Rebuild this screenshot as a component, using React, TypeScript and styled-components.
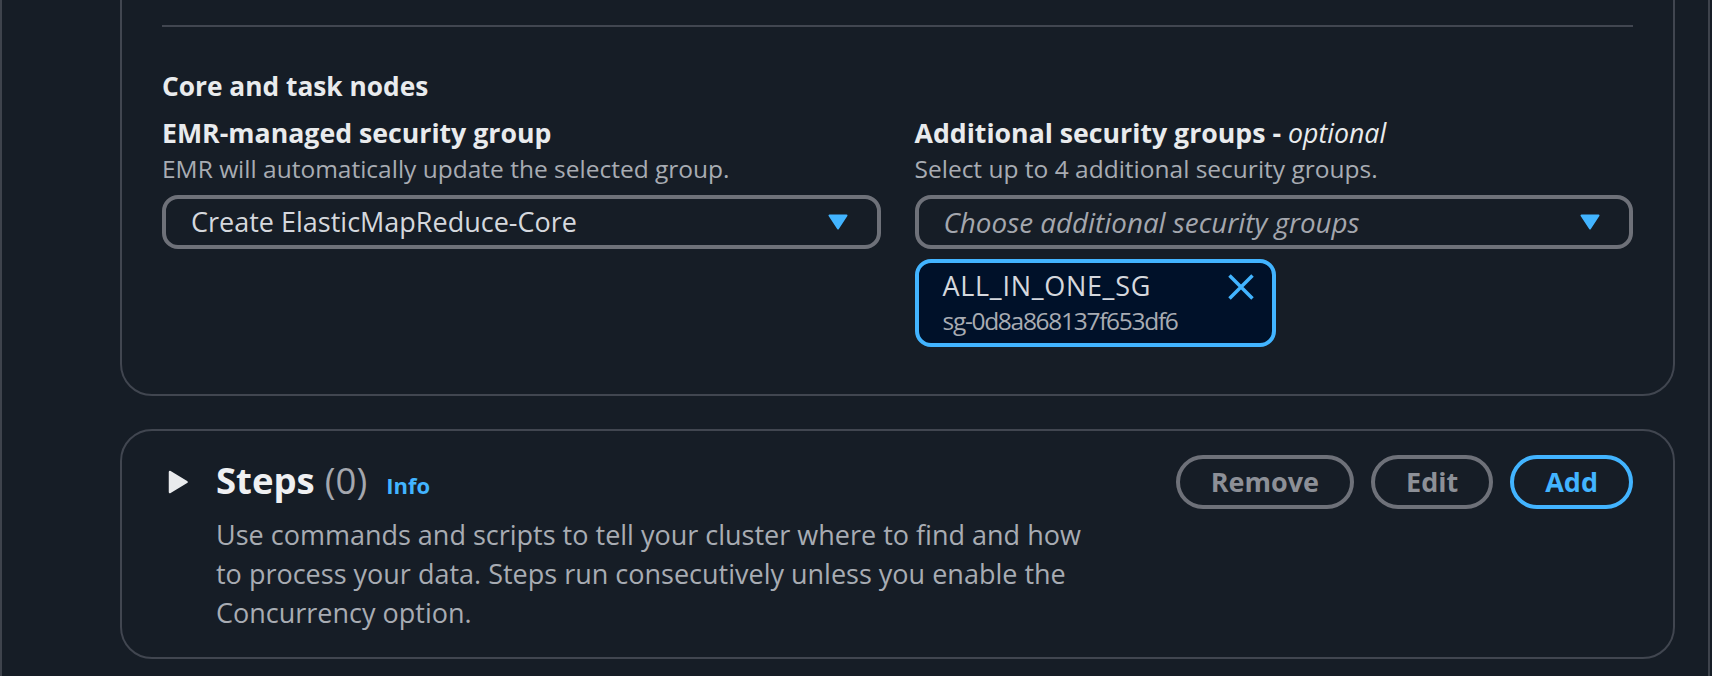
import styled, { createGlobalStyle } from "styled-components";

const GlobalStyle = createGlobalStyle`
	html, body {
		margin: 0;
		padding: 0;
		background: #161d26;
		overflow: hidden;
	}
	body {
		font-family: "Open Sans", "Noto Sans", sans-serif;
		color: #e9ebed;
	}
`;

const blue = "#42b4ff";

const Page = styled.div`
	box-sizing: border-box;
	width: 1710px;
	min-height: 760px;
	margin-top: -64px;
	padding: 0 33px 40px 118px;
	border-left: 2px solid #3e434c;
	border-right: 2px solid #3e434c;
	display: flex;
	flex-direction: column;
	gap: 33px;
`;

const Card = styled.section<{ $pad: string }>`
	border: 2px solid #414650;
	border-radius: 32px;
	padding: ${(p) => p.$pad};
	display: flex;
	flex-direction: column;
`;

const Divider = styled.div`
	height: 2px;
	background: #414650;
	margin: 47px 0 41px;
`;

const SectionTitle = styled.h3`
	margin: 0 0 11px;
	font-size: 26.3px;
	line-height: 36px;
	font-weight: 700;
	color: #e9ebed;
`;

const Columns = styled.div`
	display: grid;
	grid-template-columns: 1fr 1fr;
	column-gap: 34px;
`;

const Field = styled.div`
	display: flex;
	flex-direction: column;
	align-items: flex-start;
`;

const Label = styled.div`
	font-size: 26.7px;
	line-height: 36px;
	font-weight: 700;
	color: #e9ebed;

	i {
		font-weight: 400;
	}
`;

const Hint = styled.div`
	font-size: 24.5px;
	line-height: 36px;
	color: #a8acb3;
`;

const Select = styled.div<{ $placeholder?: boolean }>`
	box-sizing: border-box;
	margin-top: 8px;
	width: 100%;
	height: 54px;
	border: 4px solid #6e7179;
	border-radius: 16px;
	padding: 0 29px 0 25px;
	display: flex;
	align-items: center;
	justify-content: space-between;
	font-size: ${(p) => (p.$placeholder ? "27.8px" : "27px")};
	line-height: 36px;
	font-style: ${(p) => (p.$placeholder ? "italic" : "normal")};
	color: ${(p) => (p.$placeholder ? "#a4a7ae" : "#d5d8dd")};
`;

const Token = styled.div`
	margin-top: 10px;
	display: flex;
	align-items: flex-start;
	gap: 50px;
	border: 4px solid ${blue};
	border-radius: 16px;
	background: #001129;
	padding: 5px 18px 5px 24px;
`;

const TokenText = styled.div`
	display: flex;
	flex-direction: column;
`;

const TokenName = styled.div`
	font-size: 27px;
	line-height: 36px;
	letter-spacing: 0.7px;
	color: #d5d8dd;
`;

const TokenId = styled.div`
	font-size: 24.5px;
	line-height: 34px;
	letter-spacing: -1.3px;
	color: #a8acb3;
`;

const Dismiss = styled.span`
	display: flex;
	margin-top: 6px;
`;

const Header = styled.div`
	display: flex;
	justify-content: space-between;
	align-items: flex-start;
`;

const HeaderMain = styled.div`
	display: flex;
	flex-direction: column;
`;

const TitleRow = styled.div`
	height: 54px;
	display: flex;
	align-items: center;
`;

const Expand = styled.span`
	display: flex;
	margin: 0 28px 0 6px;
`;

const Title = styled.h2`
	margin: 0;
	display: flex;
	align-items: baseline;
	font-size: 36.5px;
	line-height: 48px;
	font-weight: 700;
	color: #eff0f2;
`;

const Counter = styled.span`
	font-weight: 400;
	color: #a4a7ae;
	margin-left: 10px;
`;

const InfoLink = styled.a`
	margin-left: 19px;
	font-size: 22px;
	font-weight: 700;
	color: ${blue};
	text-decoration: none;
`;

const Description = styled.p`
	margin: 6px 0 0 54px;
	max-width: 885px;
	font-size: 27px;
	line-height: 39px;
	color: #a8acb3;
`;

const Actions = styled.div`
	display: flex;
	gap: 17px;
`;

const Button = styled.button<{ $primary?: boolean }>`
	box-sizing: border-box;
	height: 54px;
	padding: 0 31px;
	border-radius: 27px;
	background: transparent;
	border: 4px solid ${(p) => (p.$primary ? blue : "#6e7179")};
	color: ${(p) => (p.$primary ? blue : "#8d9097")};
	font-family: inherit;
	font-size: 27px;
	font-weight: 700;
	line-height: 36px;
`;

const Caret = () => (
	<svg width="20" height="16" viewBox="0 0 20 16">
		<path d="M1.5 1.5 H18.5 L10 14.5 Z" fill={blue} stroke={blue} strokeWidth="2" strokeLinejoin="round" />
	</svg>
);

const ExpandIcon = () => (
	<svg width="20" height="24" viewBox="0 0 20 24">
		<path d="M2 2 L18.5 12 L2 22 Z" fill="#e9ebed" stroke="#e9ebed" strokeWidth="2.5" strokeLinejoin="round" />
	</svg>
);

const CloseIcon = () => (
	<svg width="26" height="26" viewBox="0 0 26 26">
		<path d="M1.5 1.5 L24.5 24.5 M24.5 1.5 L1.5 24.5" stroke={blue} strokeWidth="3.5" strokeLinecap="butt" />
	</svg>
);

const App = () => {
	return (
		<>
			<GlobalStyle />
			<Page>
				<Card $pad="40px 40px 47px">
					<Divider />
					<SectionTitle>Core and task nodes</SectionTitle>
					<Columns>
						<Field>
							<Label>EMR-managed security group</Label>
							<Hint>EMR will automatically update the selected group.</Hint>
							<Select>
								<span>Create ElasticMapReduce-Core</span>
								<Caret />
							</Select>
						</Field>
						<Field>
							<Label>
								Additional security groups - <i>optional</i>
							</Label>
							<Hint>Select up to 4 additional security groups.</Hint>
							<Select $placeholder>
								<span>Choose additional security groups</span>
								<Caret />
							</Select>
							<Token>
								<TokenText>
									<TokenName>ALL_IN_ONE_SG</TokenName>
									<TokenId>sg-0d8a868137f653df6</TokenId>
								</TokenText>
								<Dismiss>
									<CloseIcon />
								</Dismiss>
							</Token>
						</Field>
					</Columns>
				</Card>

				<Card $pad="24px 40px 25px">
					<Header>
						<HeaderMain>
							<TitleRow>
								<Expand>
									<ExpandIcon />
								</Expand>
								<Title>
									Steps
									<Counter>(0)</Counter>
									<InfoLink href="#">Info</InfoLink>
								</Title>
							</TitleRow>
							<Description>
								Use commands and scripts to tell your cluster where to find and how to process your
								data. Steps run consecutively unless you enable the Concurrency option.
							</Description>
						</HeaderMain>
						<Actions>
							<Button disabled>Remove</Button>
							<Button disabled>Edit</Button>
							<Button $primary>Add</Button>
						</Actions>
					</Header>
				</Card>
			</Page>
		</>
	);
};

export default App;
